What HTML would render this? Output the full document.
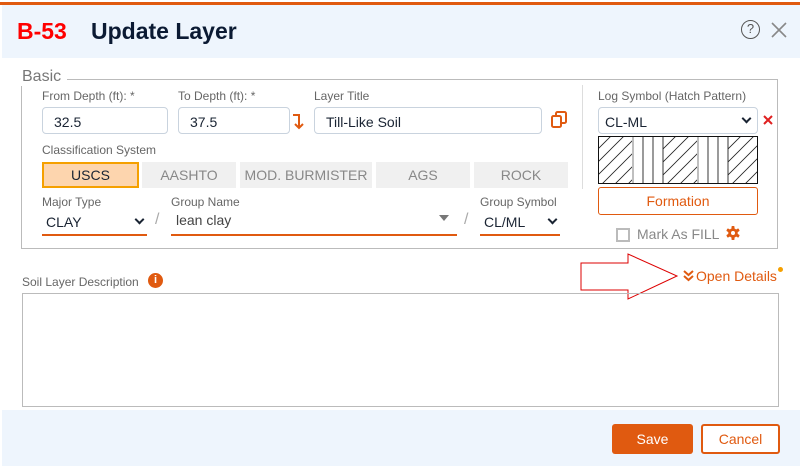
<!DOCTYPE html>
<html><head><meta charset="utf-8"><style>
*{box-sizing:border-box;margin:0;padding:0}
body{width:800px;height:468px;background:#fff;font-family:"Liberation Sans",sans-serif;position:relative;overflow:hidden}
.a{position:absolute}
.lbl{position:absolute;font-size:12px;color:#666}
.inp{position:absolute;border:1px solid #c9d3de;border-radius:4px;height:27px;font-size:14px;color:#1a2433;padding:6px 11px;background:#fff}
.tab{position:absolute;top:162px;height:26px;background:#f0f0f0;color:#888;font-size:14px;text-align:center;line-height:26px}
.sel{position:absolute;height:27px;border-bottom:2px solid #e05a10;font-size:14px;color:#1a2433;padding-top:5px}
.chev{position:absolute;right:4px;top:7px;width:7px;height:7px;border-right:2px solid #1a2433;border-bottom:2px solid #1a2433;transform:rotate(45deg)}
</style></head><body>
<div class="a" style="left:0;top:2px;width:800px;height:3px;background:#e05a10"></div>
<div class="a" style="left:2px;top:5px;width:798px;height:53px;background:#eef5fd"></div>
<div class="a" style="left:17px;top:18px;font-size:23px;font-weight:bold;color:#f00">B-53</div>
<div class="a" style="left:91px;top:18px;font-size:23px;font-weight:bold;color:#0b1a33">Update Layer</div>
<div class="a" style="left:741px;top:20px;width:19px;height:19px;border:1.5px solid #555;border-radius:50%;font-size:13px;color:#555;text-align:center;line-height:16px">?</div>
<svg class="a" style="left:771px;top:22px" width="16" height="16"><path d="M1 1L15 15M15 1L1 15" stroke="#888" stroke-width="1.6"/></svg>

<div class="a" style="left:21px;top:80px;width:757px;height:169px;border:1px solid #bbb;border-top:none"></div>
<div class="a" style="left:21px;top:79px;width:757px;height:1px;background:#bbb"></div>
<div class="a" style="left:18px;top:68px;font-size:16px;color:#777;background:#fff;padding:0 6px 0 4px">Basic</div>

<div class="lbl" style="left:42px;top:89px">From Depth (ft): *</div>
<div class="inp" style="left:42px;top:107px;width:126px">32.5</div>
<div class="lbl" style="left:178px;top:89px">To Depth (ft): *</div>
<div class="inp" style="left:178px;top:107px;width:112px">37.5</div>
<svg class="a" style="left:292px;top:113px" width="12" height="18"><path d="M1 2H7V15M3 11L7 15L11 11" fill="none" stroke="#e05a10" stroke-width="2"/></svg>
<div class="lbl" style="left:314px;top:89px">Layer Title</div>
<div class="inp" style="left:314px;top:107px;width:228px">Till-Like Soil</div>
<svg class="a" style="left:551px;top:111px" width="16" height="17" viewBox="0 0 16 17"><rect x="1" y="5" width="9" height="11" rx="1.5" fill="none" stroke="#e05a10" stroke-width="2"/><path d="M5 4V2.5A1.5 1.5 0 0 1 6.5 1H13.5A1.5 1.5 0 0 1 15 2.5V10.5A1.5 1.5 0 0 1 13.5 12H11" fill="none" stroke="#e05a10" stroke-width="2"/></svg>
<div class="a" style="left:582px;top:85px;width:1px;height:104px;background:#ddd"></div>

<div class="lbl" style="left:42px;top:143px">Classification System</div>
<div class="tab" style="left:42px;width:97px;background:#fdd5ae;border:2px solid #f5a000;color:#1a2433;line-height:22px">USCS</div>
<div class="tab" style="left:142px;width:94px">AASHTO</div>
<div class="tab" style="left:240px;width:132px">MOD. BURMISTER</div>
<div class="tab" style="left:376px;width:94px">AGS</div>
<div class="tab" style="left:474px;width:94px">ROCK</div>

<div class="lbl" style="left:42px;top:195px">Major Type</div>
<div class="sel" style="left:42px;top:209px;width:105px;padding-left:4px">CLAY<span class="chev"></span></div>
<div class="a" style="left:155px;top:211px;color:#aaa;font-size:16px">/</div>
<div class="lbl" style="left:171px;top:195px">Group Name</div>
<div class="sel" style="left:171px;top:209px;width:286px;padding-left:5px;padding-top:3px;color:#444">lean clay<span class="a" style="right:8px;top:6px;border:5px solid transparent;border-top:6px solid #777;width:0;height:0"></span></div>
<div class="a" style="left:464px;top:211px;color:#aaa;font-size:16px">/</div>
<div class="lbl" style="left:480px;top:195px">Group Symbol</div>
<div class="sel" style="left:480px;top:209px;width:80px;padding-left:4px">CL/ML<span class="chev"></span></div>

<div class="lbl" style="left:598px;top:89px">Log Symbol (Hatch Pattern)</div>
<div class="inp" style="left:598px;top:107px;width:160px;padding-left:6px">CL-ML<span class="chev" style="right:7px;top:7px"></span></div>
<svg class="a" style="left:763px;top:115px" width="10" height="10"><path d="M1 1L9 9M9 1L1 9" stroke="#e02020" stroke-width="2"/></svg>
<svg class="a" style="left:598px;top:136px" width="160" height="48" viewBox="0 0 160 48">
<defs><pattern id="d" width="13" height="13" patternUnits="userSpaceOnUse"><path d="M-3 16L16 -3M-3 3L3 -3M10 16L16 10" stroke="#222" stroke-width="0.8"/></pattern></defs>
<rect x="0" y="0" width="160" height="48" fill="#fff"/>
<rect x="0" y="0" width="34" height="48" fill="url(#d)"/>
<rect x="65" y="0" width="34" height="48" fill="url(#d)"/>
<rect x="130" y="0" width="30" height="48" fill="url(#d)"/>
<path d="M45 0V48M55 0V48M65 0V48M110 0V48M120 0V48M130 0V48" stroke="#222" stroke-width="0.9"/>
<path d="M35 0V48M100 0V48" stroke="#aaa" stroke-width="1.5"/>
<rect x="0.5" y="0.5" width="159" height="47" fill="none" stroke="#111"/>
</svg>
<div class="a" style="left:598px;top:187px;width:160px;height:28px;border:1px solid #e05a10;border-radius:3px;color:#e05a10;font-size:14px;text-align:center;line-height:26px">Formation</div>
<div class="a" style="left:616px;top:228px;width:14px;height:14px;border:2px solid #bbb"></div>
<div class="a" style="left:637px;top:226px;font-size:14px;color:#888">Mark As FILL</div>
<svg class="a" style="left:726px;top:226px" width="14" height="14" viewBox="0 0 14 14"><g fill="#e05a10"><circle cx="7" cy="7" r="4.8"/><rect x="5.5" y="0" width="3" height="14" rx="0.8"/><rect x="5.5" y="0" width="3" height="14" rx="0.8" transform="rotate(60 7 7)"/><rect x="5.5" y="0" width="3" height="14" rx="0.8" transform="rotate(120 7 7)"/></g><circle cx="7" cy="7" r="2" fill="#fff"/></svg>

<div class="lbl" style="left:22px;top:275px">Soil Layer Description</div>
<div class="a" style="left:148px;top:273px;width:15px;height:15px;border-radius:50%;background:#e05a10;color:#fff;font-size:11px;font-weight:bold;text-align:center;line-height:15px">i</div>
<svg class="a" style="left:580px;top:253px" width="100" height="47"><path d="M1 10H48V1L97 23L48 46V37H1Z" fill="#fff" stroke="#d00" stroke-width="1"/></svg>
<svg class="a" style="left:683px;top:270px" width="11" height="12"><path d="M1 1L5.5 5L10 1M1 6L5.5 10L10 6" fill="none" stroke="#e05a10" stroke-width="2"/></svg>
<div class="a" style="left:696px;top:268px;color:#e05a10;font-size:14px">Open Details</div>
<div class="a" style="left:778px;top:267px;width:5px;height:5px;border-radius:50%;background:#f5a000"></div>
<div class="a" style="left:22px;top:293px;width:757px;height:114px;border:1px solid #bbb"></div>

<div class="a" style="left:2px;top:410px;width:798px;height:56px;background:#eef5fd"></div>
<div class="a" style="left:612px;top:424px;width:81px;height:30px;background:#e05a10;border-radius:3px;color:#fff;font-size:14px;text-align:center;line-height:30px">Save</div>
<div class="a" style="left:701px;top:424px;width:79px;height:30px;border:2px solid #e05a10;border-radius:3px;background:#fff;color:#e05a10;font-size:14px;text-align:center;line-height:26px">Cancel</div>
</body></html>
